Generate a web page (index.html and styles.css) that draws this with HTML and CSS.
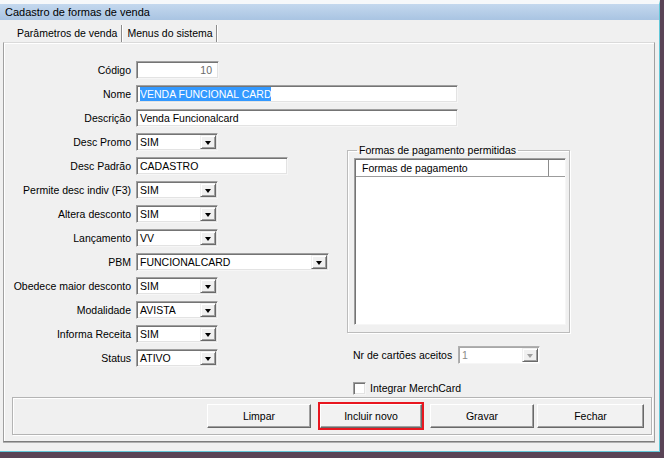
FILE: index.html
```html
<!DOCTYPE html>
<html>
  <head>
    <meta charset="utf-8"/>
    <link rel="stylesheet" href="styles.css">
  </head>
<body>
<div class="screen">
  <div class="window">
    <div class="titlebar">Cadastro de formas de venda</div>
    <div class="client">
      <div class="tabs">
        <div class="tab first">Parâmetros de venda</div>
        <div class="tab">Menus do sistema</div>
      </div>
      <div class="panel">
        <div class="form">
          <div class="top">
            <div class="row"><span class="lbl">Código</span><div class="box code">10</div></div>
            <div class="row"><span class="lbl">Nome</span><div class="box wide"><span class="sel">VENDA FUNCIONAL CARD</span></div></div>
            <div class="row"><span class="lbl">Descrição</span><div class="box wide">Venda Funcionalcard</div></div>
            <div class="row"><span class="lbl">Desc Promo</span><div class="box combo">SIM<span class="drop"></span></div></div>
          </div>
          <div class="left">
            <div class="row"><span class="lbl">Desc Padrão</span><div class="box mid">CADASTRO</div></div>
            <div class="row"><span class="lbl">Permite desc indiv (F3)</span><div class="box combo">SIM<span class="drop"></span></div></div>
            <div class="row"><span class="lbl">Altera desconto</span><div class="box combo">SIM<span class="drop"></span></div></div>
            <div class="row"><span class="lbl">Lançamento</span><div class="box combo">VV<span class="drop"></span></div></div>
            <div class="row"><span class="lbl">PBM</span><div class="box combo pbm">FUNCIONALCARD<span class="drop"></span></div></div>
            <div class="row"><span class="lbl">Obedece maior desconto</span><div class="box combo">SIM<span class="drop"></span></div></div>
            <div class="row"><span class="lbl">Modalidade</span><div class="box combo">AVISTA<span class="drop"></span></div></div>
            <div class="row"><span class="lbl">Informa Receita</span><div class="box combo">SIM<span class="drop"></span></div></div>
            <div class="row"><span class="lbl">Status</span><div class="box combo">ATIVO<span class="drop"></span></div></div>
          </div>
          <div class="right">
            <fieldset class="group">
              <legend>Formas de pagamento permitidas</legend>
              <div class="list">
                <div class="list-head">
                  <div class="col-main">Formas de pagamento</div>
                  <div class="col-rest"></div>
                </div>
              </div>
            </fieldset>
            <div class="row nr"><span class="nr-lbl">Nr de cartões aceitos</span><div class="box combo disabled">1<span class="drop"></span></div></div>
            <div class="check-row"><span class="check"></span><span>Integrar MerchCard</span></div>
          </div>
        </div>
        <div class="actions">
          <button class="btn">Limpar</button>
          <button class="btn marked">Incluir novo</button>
          <button class="btn save">Gravar</button>
          <button class="btn close">Fechar</button>
        </div>
      </div>
    </div>
  </div>
</div>
</body>
</html>
```

FILE: styles.css
```css
* {
  box-sizing: border-box;
}

body {
  margin: 0;
  background-color: #5a4456;
  font-family: "Liberation Sans", Arial, sans-serif;
  font-size: 10.5px;
  color: #000;
}

.screen {
  width: 664px;
  height: 458px;
  overflow: hidden;
}

.window {
  width: 660px;
  height: 452px;
  background-color: #f0f0f0;
  border-top: 4px solid #f6f8fa;
  border-right: 1px solid #62c7d8;
  border-bottom: 1px solid #62c7d8;
  display: flex;
  flex-direction: column;
}

.titlebar {
  height: 16px;
  line-height: 16px;
  padding-left: 5px;
  font-size: 11px;
  background: linear-gradient(#c4d8ee, #a9c4e2);
}

.client {
  flex: 1;
  display: flex;
  flex-direction: column;
  padding: 2px 4px 9px 3px;
}

.tabs {
  display: flex;
  height: 20px;
  padding-left: 5px;
}

.tab {
  margin-top: 3px;
  height: 17px;
  line-height: 16px;
  padding: 0 3px 0 5px;
  border-right: 1px solid #8c8c8c;
  box-shadow: 1px 0 0 #ffffff;
}

.tab.first {
  padding: 0 4px 0 9px;
}

.panel {
  flex: 1;
  display: flex;
  flex-direction: column;
  border: 1px solid #a0a0a0;
  border-top-color: #dadada;
  border-bottom-color: #7c7c7c;
  box-shadow: inset 1px 1px 0 #ffffff, 0 1px 0 #b0b0b0;
}

.form {
  display: grid;
  grid-template-columns: 343px 223px;
  grid-template-areas: "top top" "left right";
  padding-top: 18px;
}

.top {
  grid-area: top;
}

.left {
  grid-area: left;
}

.right {
  grid-area: right;
}

.row {
  display: flex;
  align-items: center;
  height: 18px;
  margin-bottom: 6px;
}

.lbl {
  flex: none;
  width: 132px;
  padding-right: 5px;
  text-align: right;
  white-space: nowrap;
}

.box {
  height: 18px;
  line-height: 16px;
  padding: 0 3px;
  background-color: #fff;
  border: 1px solid;
  border-color: #a0a0a0 #f6f6f6 #f6f6f6 #a0a0a0;
  box-shadow: inset 1px 1px 0 #747474, inset -1px -1px 0 #e3e3e3;
  white-space: nowrap;
  overflow: hidden;
}

.code {
  width: 83px;
  text-align: right;
  padding-right: 6px;
  color: #6a6a6a;
}

.wide {
  width: 322px;
}

.mid {
  width: 152px;
}

.sel {
  background-color: #3399ff;
  color: #fff;
  padding: 1px 0;
}

.combo {
  width: 82px;
  display: flex;
  align-items: center;
  padding-right: 1px;
}

.combo.pbm {
  width: 193px;
}

.drop {
  flex: none;
  margin-left: auto;
  width: 16px;
  height: 14px;
  background-color: #f0f0f0;
  border: 1px solid;
  border-color: #f0f0f0 #696969 #696969 #f0f0f0;
  box-shadow: inset 1px 1px 0 #ffffff, inset -1px -1px 0 #a0a0a0;
  display: flex;
  align-items: center;
  justify-content: center;
}

.drop::after {
  content: "";
  border-left: 3.5px solid transparent;
  border-right: 3.5px solid transparent;
  border-top: 4px solid #000;
  margin-top: 1px;
}

.disabled {
  color: #8a8a8a;
  border-color: #b0b0b0 #f6f6f6 #f6f6f6 #b0b0b0;
  box-shadow: inset 1px 1px 0 #a8a8a8;
}

.disabled .drop::after {
  border-top-color: #a0a0a0;
}

.group {
  margin: -13px 0 0 0;
  padding: 0 3px 4px 6px;
  height: 189px;
  border: 1px solid #bcbcbc;
  box-shadow: inset 1px 1px 0 #ffffff, 1px 1px 0 #ffffff;
  min-width: 0;
}

.group legend {
  margin-left: 3px;
  padding: 0 2px;
}

.list {
  margin-top: 2px;
  height: 167px;
  background-color: #fff;
  border: 1px solid;
  border-color: #a0a0a0 #f6f6f6 #f6f6f6 #a0a0a0;
  box-shadow: inset 1px 1px 0 #747474;
}

.list-head {
  display: flex;
  height: 17px;
  line-height: 16px;
  border-bottom: 1px solid #9c9c9c;
  margin: 1px 0 0 1px;
}

.col-main {
  width: 193px;
  padding-left: 6px;
  border-right: 1px solid #8c8c8c;
}

.col-rest {
  flex: 1;
}

.nr {
  margin: 13px 0 0 6px;
}

.nr-lbl {
  width: 105px;
  white-space: nowrap;
}

.check-row {
  display: flex;
  align-items: center;
  margin: 17px 0 0 6px;
  height: 14px;
}

.check {
  width: 13px;
  height: 13px;
  margin-right: 4px;
  background-color: #fff;
  border: 1px solid;
  border-color: #a0a0a0 #f6f6f6 #f6f6f6 #a0a0a0;
  box-shadow: inset 1px 1px 0 #747474, inset -1px -1px 0 #e3e3e3;
}

.actions {
  margin: auto 2px 6px 8px;
  height: 38px;
  display: flex;
  align-items: center;
  justify-content: flex-end;
  padding-right: 7px;
  border: 1px solid #b4b4b4;
  box-shadow: inset 1px 1px 0 #ffffff, 1px 1px 0 #ffffff;
}

.btn {
  width: 104px;
  height: 24px;
  font-family: inherit;
  font-size: 10.5px;
  color: #000;
  background-color: #f2f2f2;
  border: 1px solid;
  border-color: #ffffff #696969 #696969 #ffffff;
  box-shadow: inset -1px -1px 0 #a0a0a0;
  padding: 0;
}

.btn.marked {
  width: 102px;
  margin-left: 9px;
  outline: 2px solid #e8161f;
  outline-offset: 0;
}

.btn.save {
  margin-left: 8px;
}

.btn.close {
  width: 107px;
  margin-left: 3px;
}
```
